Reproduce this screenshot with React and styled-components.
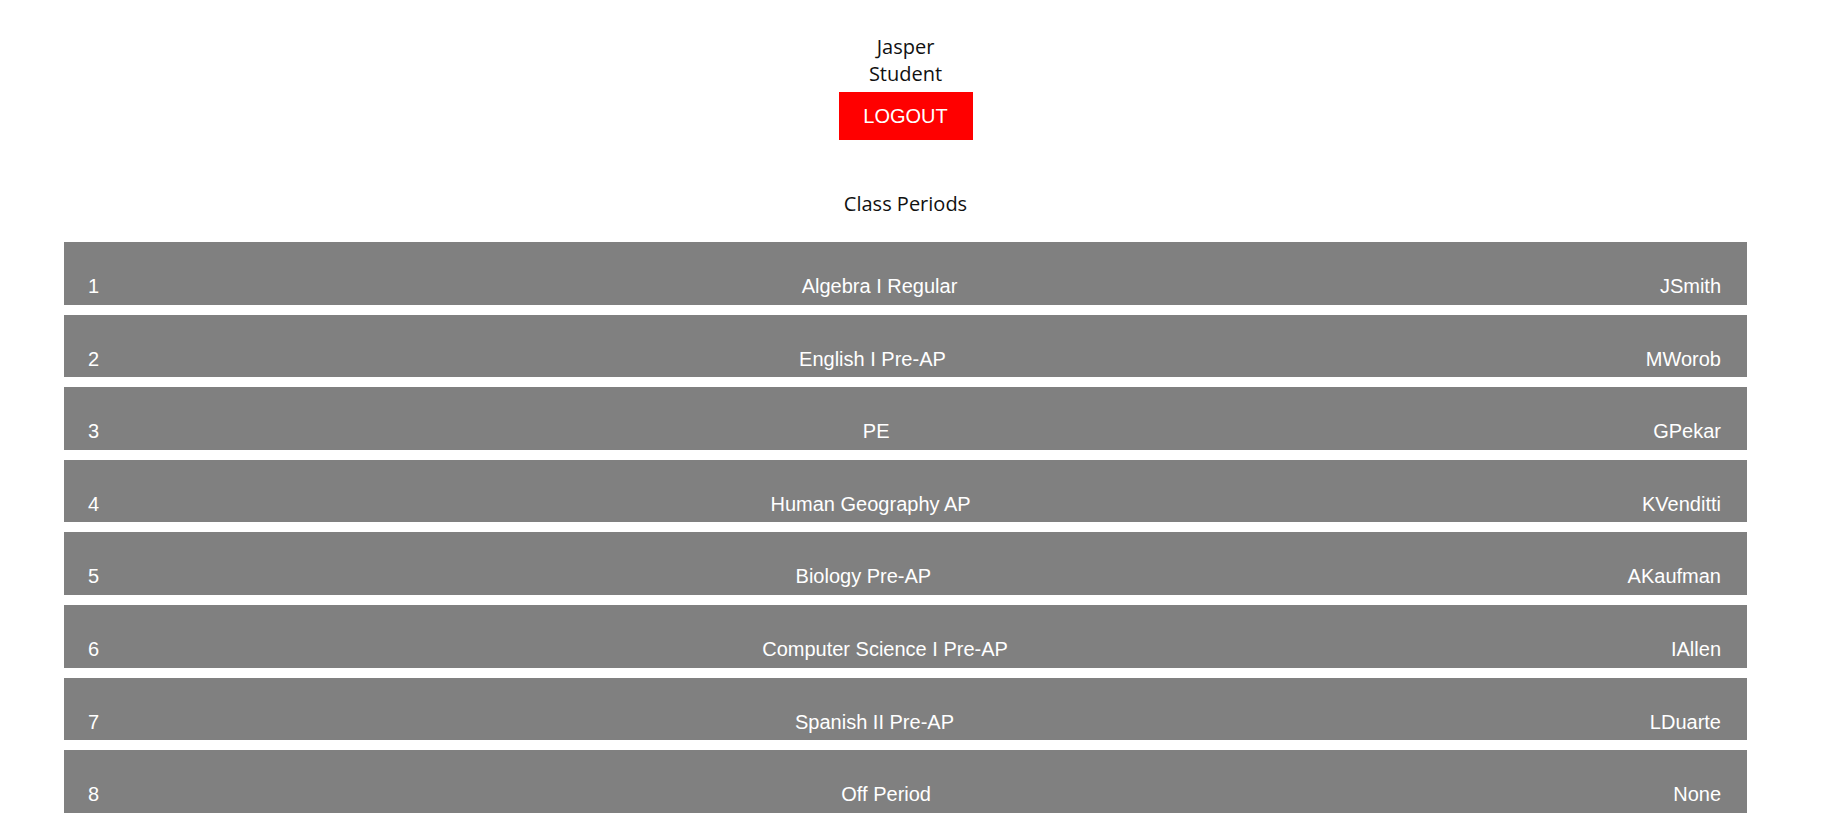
import { createGlobalStyle, styled } from "styled-components"

const GlobalStyle = createGlobalStyle`
  body {
    margin: 0;
    background: #ffffff;
    font-family: "Open Sans", sans-serif;
  }
`

const periods = [
  { num: 1, name: "Algebra I Regular", teacher: "JSmith" },
  { num: 2, name: "English I Pre-AP", teacher: "MWorob" },
  { num: 3, name: "PE", teacher: "GPekar" },
  { num: 4, name: "Human Geography AP", teacher: "KVenditti" },
  { num: 5, name: "Biology Pre-AP", teacher: "AKaufman" },
  { num: 6, name: "Computer Science I Pre-AP", teacher: "IAllen" },
  { num: 7, name: "Spanish II Pre-AP", teacher: "LDuarte" },
  { num: 8, name: "Off Period", teacher: "None" },
]

const App = () => {
  return (
    <>
      <GlobalStyle />
      <Page>
        <Header>
          <UserLine>Jasper</UserLine>
          <UserLine>Student</UserLine>
          <LogoutBtn>LOGOUT</LogoutBtn>
        </Header>

        <Title>Class Periods</Title>

        <PeriodList>
          {periods.map((p) => (
            <PeriodRow key={p.num}>
              <Cell>{p.num}</Cell>
              <Cell>{p.name}</Cell>
              <Cell>{p.teacher}</Cell>
            </PeriodRow>
          ))}
        </PeriodList>
      </Page>
    </>
  )
}

export default App

const Page = styled.div`
  padding: 33px 97px 0 64px;
  display: flex;
  flex-direction: column;
  align-items: stretch;
`

const Header = styled.div`
  display: flex;
  flex-direction: column;
  align-items: center;
`

const UserLine = styled.div`
  font-family: "Open Sans", sans-serif;
  font-size: 20px;
  line-height: 27px;
  color: #111111;
`

const LogoutBtn = styled.button`
  margin-top: 5px;
  width: 134px;
  height: 48px;
  border: none;
  background-color: #ff0000;
  color: #ffffff;
  font-family: "Liberation Sans", Arial, sans-serif;
  font-size: 20px;
  padding: 0;
  cursor: pointer;
`

const Title = styled.div`
  margin-top: 50px;
  text-align: center;
  font-family: "Open Sans", sans-serif;
  font-size: 20px;
  line-height: 27px;
  color: #111111;
`

const PeriodList = styled.div`
  margin-top: 25px;
  display: flex;
  flex-direction: column;
  gap: 10px;
`

const PeriodRow = styled.div`
  box-sizing: border-box;
  height: 62.6px;
  padding: 33px 26px 0 24px;
  background-color: #808080;
  display: flex;
  justify-content: space-between;
  align-items: flex-start;
`

const Cell = styled.span`
  font-family: "Liberation Sans", Arial, sans-serif;
  font-size: 20px;
  line-height: 23px;
  color: #ffffff;
`
